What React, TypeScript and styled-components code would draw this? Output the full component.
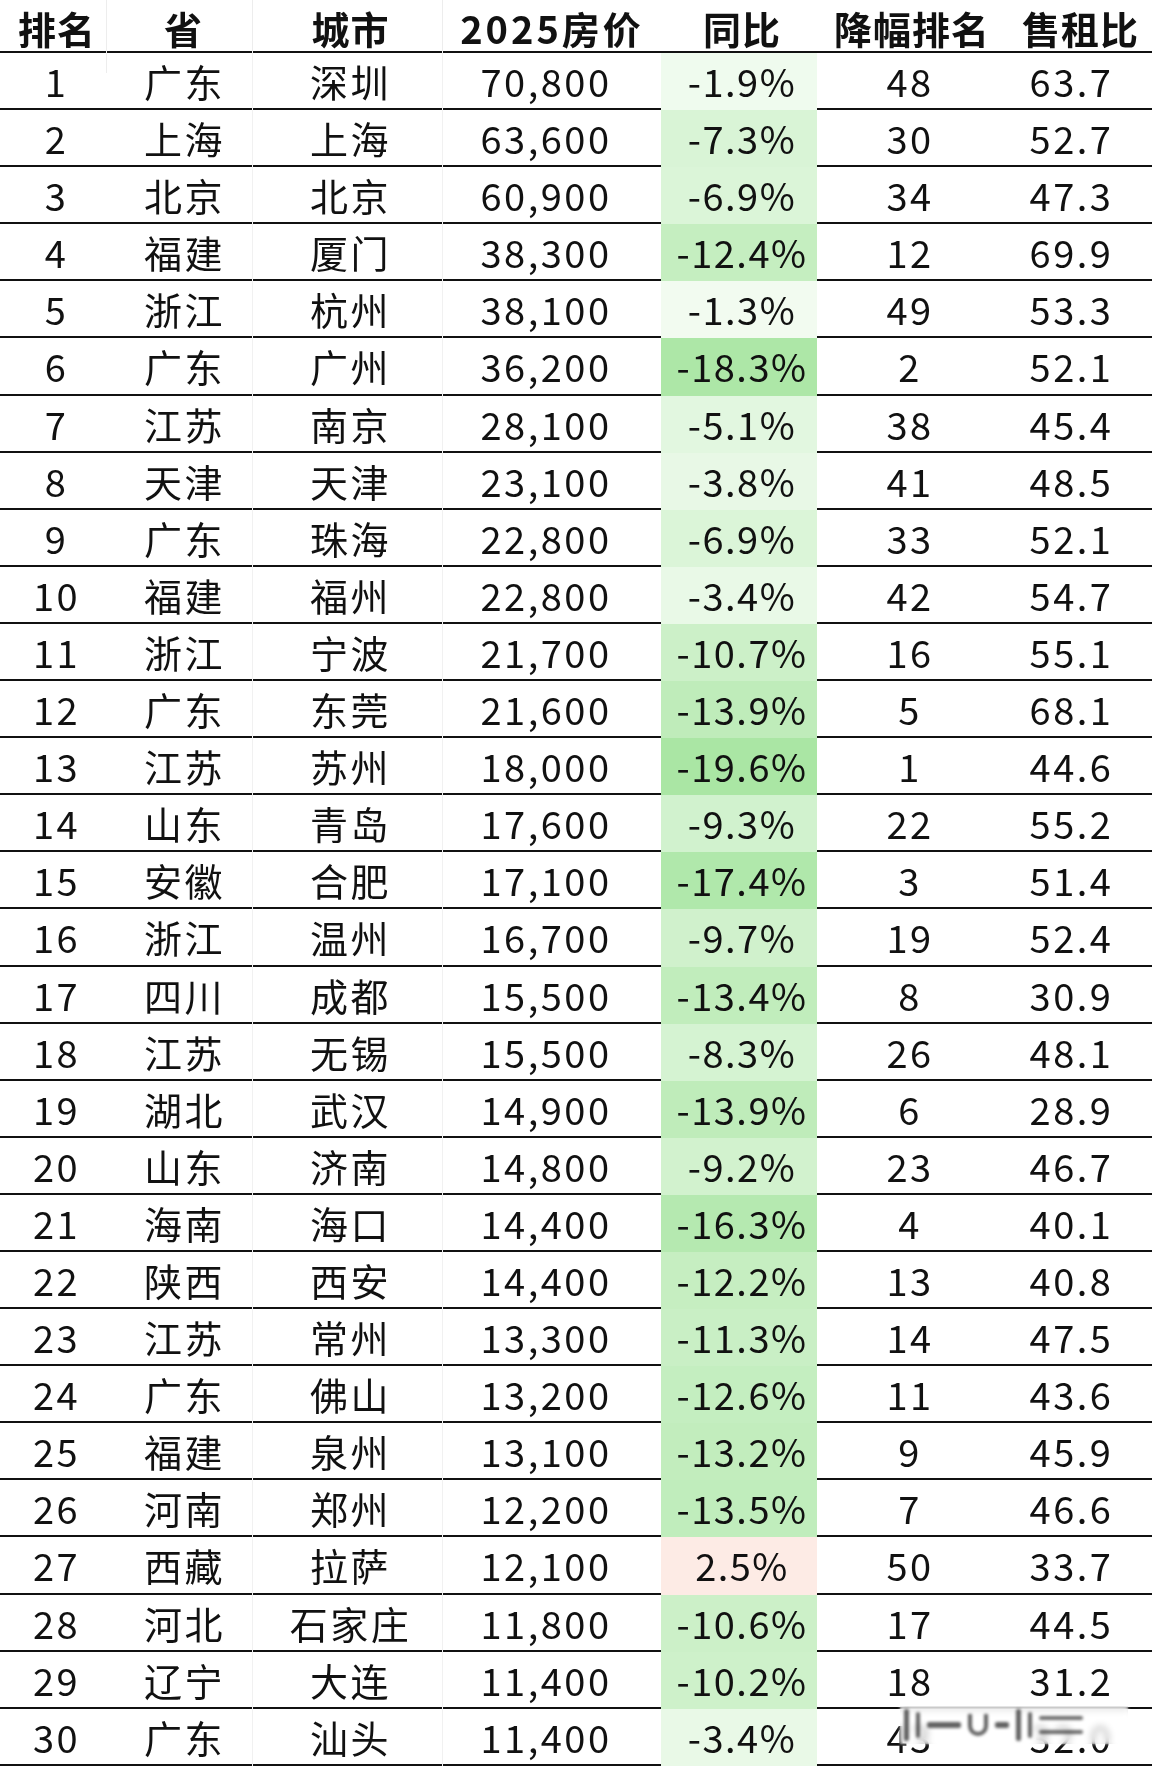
import React from "react";
import styled, { createGlobalStyle } from "styled-components";

const Global = createGlobalStyle`
  html, body { margin: 0; padding: 0; background: #ffffff; }
  body { font-family: "Noto Sans CJK SC", "Noto Sans", sans-serif; color: #111; }
`;

const COLS = "107px 146px 190px 218px 156px 186px 149px";

const Table = styled.div`
  position: relative;
  width: 1152px;
  display: flex;
  flex-direction: column;
`;

const HeaderRow = styled.div`
  display: grid;
  grid-template-columns: ${COLS};
  height: 53px;
  box-sizing: border-box;
  border-bottom: 2px solid #111;
`;

const HeadCell = styled.div<{ $pl?: number; $pr?: number; $line?: boolean; $ls?: number }>`
  display: flex;
  align-items: center;
  justify-content: center;
  padding-left: ${(p) => p.$pl ?? 0}px;
  padding-right: ${(p) => p.$pr ?? 0}px;
  padding-bottom: 18px;
  font-size: 38px;
  font-weight: 700;
  letter-spacing: ${(p) => p.$ls ?? 1}px;
  white-space: nowrap;
  box-sizing: border-box;
  border-right: ${(p) => (p.$line ? "1px solid #ededed" : "none")};
`;

const Row = styled.div`
  display: grid;
  grid-template-columns: ${COLS};
  height: 57.1px;
  box-sizing: border-box;
  border-bottom: 2px solid #111;
`;

const Cell = styled.div<{ $pl?: number; $pr?: number; $bg?: string; $line?: boolean; $ls?: number }>`
  display: flex;
  align-items: center;
  justify-content: center;
  padding-bottom: 3px;
  padding-left: ${(p) => p.$pl ?? 0}px;
  padding-right: ${(p) => p.$pr ?? 0}px;
  box-sizing: border-box;
  background: ${(p) => p.$bg ?? "transparent"};
  font-size: 38px;
  font-weight: 400;
  letter-spacing: ${(p) => p.$ls ?? 2.5}px;
  white-space: nowrap;
  border-right: ${(p) => (p.$line ? "1px solid #f1f1f1" : "none")};
`;

const Watermark = styled.div`
  position: absolute;
  left: 900px;
  top: 1706px;
  width: 228px;
  height: 38px;
  background: rgba(255, 255, 255, 0.7);
  backdrop-filter: blur(3px);
  display: flex;
  align-items: center;
  gap: 7px;
  padding: 0 4px;
  box-sizing: border-box;
  filter: blur(1.8px);
`;

const Stroke = styled.div<{ $h: number; $w?: number; $round?: boolean }>`
  width: ${(p) => p.$w ?? 5}px;
  height: ${(p) => p.$h}px;
  background: ${(p) => (p.$round ? "transparent" : "rgba(30, 30, 30, 0.7)")};
  border: ${(p) => (p.$round ? "4px solid rgba(30,30,30,0.7)" : "none")};
  border-top: none;
  border-radius: ${(p) => (p.$round ? "0 0 12px 12px" : "2px")};
  box-sizing: border-box;
`;

const Dash = styled.div`
  width: 44px;
  height: 18px;
  display: flex;
  flex-direction: column;
  justify-content: space-between;
  &::before, &::after {
    content: "";
    height: 4px;
    background: rgba(30, 30, 30, 0.65);
    border-radius: 2px;
  }
`;

type R = [number, string, string, string, number, number, string];

const rows: R[] = [
  [1, "广东", "深圳", "70,800", -1.9, 48, "63.7"],
  [2, "上海", "上海", "63,600", -7.3, 30, "52.7"],
  [3, "北京", "北京", "60,900", -6.9, 34, "47.3"],
  [4, "福建", "厦门", "38,300", -12.4, 12, "69.9"],
  [5, "浙江", "杭州", "38,100", -1.3, 49, "53.3"],
  [6, "广东", "广州", "36,200", -18.3, 2, "52.1"],
  [7, "江苏", "南京", "28,100", -5.1, 38, "45.4"],
  [8, "天津", "天津", "23,100", -3.8, 41, "48.5"],
  [9, "广东", "珠海", "22,800", -6.9, 33, "52.1"],
  [10, "福建", "福州", "22,800", -3.4, 42, "54.7"],
  [11, "浙江", "宁波", "21,700", -10.7, 16, "55.1"],
  [12, "广东", "东莞", "21,600", -13.9, 5, "68.1"],
  [13, "江苏", "苏州", "18,000", -19.6, 1, "44.6"],
  [14, "山东", "青岛", "17,600", -9.3, 22, "55.2"],
  [15, "安徽", "合肥", "17,100", -17.4, 3, "51.4"],
  [16, "浙江", "温州", "16,700", -9.7, 19, "52.4"],
  [17, "四川", "成都", "15,500", -13.4, 8, "30.9"],
  [18, "江苏", "无锡", "15,500", -8.3, 26, "48.1"],
  [19, "湖北", "武汉", "14,900", -13.9, 6, "28.9"],
  [20, "山东", "济南", "14,800", -9.2, 23, "46.7"],
  [21, "海南", "海口", "14,400", -16.3, 4, "40.1"],
  [22, "陕西", "西安", "14,400", -12.2, 13, "40.8"],
  [23, "江苏", "常州", "13,300", -11.3, 14, "47.5"],
  [24, "广东", "佛山", "13,200", -12.6, 11, "43.6"],
  [25, "福建", "泉州", "13,100", -13.2, 9, "45.9"],
  [26, "河南", "郑州", "12,200", -13.5, 7, "46.6"],
  [27, "西藏", "拉萨", "12,100", 2.5, 50, "33.7"],
  [28, "河北", "石家庄", "11,800", -10.6, 17, "44.5"],
  [29, "辽宁", "大连", "11,400", -10.2, 18, "31.2"],
  [30, "广东", "汕头", "11,400", -3.4, 43, "32.0"],
];

function cellColor(v: number): string {
  if (v > 0) return "#fdebe5";
  const t = Math.min(Math.abs(v) / 19, 1);
  const a = [247, 253, 246];
  const b = [170, 230, 164];
  const c = a.map((x, i) => Math.round(x + (b[i] - x) * t));
  return `rgb(${c[0]},${c[1]},${c[2]})`;
}

function fmt(v: number): string {
  return `${v.toFixed(1)}%`;
}

export default function App() {
  return (
    <>
      <Global />
      <Table>
        <HeaderRow>
          <HeadCell $line $pl={8}>排名</HeadCell>
          <HeadCell $line $pl={8}>省</HeadCell>
          <HeadCell $line $pl={6}>城市</HeadCell>
          <HeadCell $ls={3}>2025房价</HeadCell>
          <HeadCell $pl={6}>同比</HeadCell>
          <HeadCell $pl={4}>降幅排名</HeadCell>
          <HeadCell $pl={6}>售租比</HeadCell>
        </HeaderRow>
        {rows.map((r) => (
          <Row key={r[0]}>
            <Cell $pl={6}>{r[0]}</Cell>
            <Cell $line $pl={10}>{r[1]}</Cell>
            <Cell $line $pl={6}>{r[2]}</Cell>
            <Cell $pr={12}>{r[3]}</Cell>
            <Cell $bg={cellColor(r[4])} $ls={1.5} $pl={6}>{fmt(r[4])}</Cell>
            <Cell>{r[5]}</Cell>
            <Cell $pr={12}>{r[6]}</Cell>
          </Row>
        ))}
        <Watermark>
          <Stroke $h={32} />
          <Stroke $h={26} $w={4} />
          <Stroke $h={6} $w={34} />
          <Stroke $h={22} $w={20} $round />
          <Stroke $h={6} $w={14} />
          <Stroke $h={32} />
          <Stroke $h={26} $w={4} />
          <Dash />
        </Watermark>
      </Table>
    </>
  );
}
